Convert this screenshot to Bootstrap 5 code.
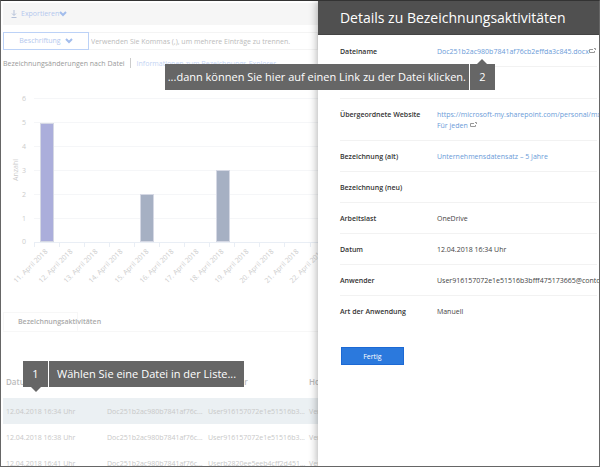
<!DOCTYPE html>
<html lang="de">
<head>
<meta charset="utf-8">
<meta name="viewport" content="width=device-width, initial-scale=1">
<title>Bezeichnungs-Explorer</title>
<link rel="stylesheet" href="https://cdn.jsdelivr.net/npm/bootstrap@5.3.0/dist/css/bootstrap.min.css">
<style>
  body { font-family: "Segoe UI", "Open Sans", "Noto Sans", sans-serif; font-size: 7px; line-height: 11px; color: #444; background: #fff; }
  .frame { border: 1px solid #666; border-top-color: #333; }
  .explorer { flex: 0 0 53%; min-width: 0; padding: 2px 0 0 2px; color: #c4c4c4; }
  .toolbar { height: 22px; padding-left: 8px; background: #f6f6f6; }
  .tool { padding: 0; border: 0; background: none; color: #b4c8ee; font-size: 7px; line-height: 12px; }
  .chevron { width: 8px; height: 6px; fill: none; stroke: #a3bdec; stroke-width: 2; }
  .filter { height: 18px; margin-top: 7px; }
  .filter-type { width: 86px; border: 1px solid #bcd2f7; }
  .filter-text { min-width: 0; padding: 0 2px; border: 1px solid #f4f4f4; border-left: 0; font-size: 7px; color: #bbb; }
  .filter-text::placeholder { color: #bbb; opacity: 1; }
  .view-title { margin-top: 8px; height: 12px; line-height: 12px; }
  .view-title h2 { font-size: 7px; line-height: 12px; color: #999; }
  .view-title a { height: 10px; margin-left: 5px; padding-left: 6px; border-left: 1px solid #ccc; color: #c3d3f3; text-decoration: none; }
  .chart { height: 216px; margin: 16px 0 0 0; }
  .chart text { font-size: 7px; fill: #ccc; }
  .tabs { height: 20px; margin: 10px 0 0; border-bottom: 1px solid #f7f7f7; }
  .tab-item { width: 75px; padding: 0 0 0 14px; border: 1px solid #f7f7f7; border-bottom-color: #fff; background: #fff; color: #aaa; font-weight: 600; text-align: left; white-space: nowrap; }
  .activities { width: 406px; margin-top: 40px; table-layout: fixed; }
  .activities th { height: 26px; padding: 0 3px 8px; font-size: 8px; font-weight: 600; color: #bbb; }
  .activities td { height: 26px; padding: 0 3px; color: #c8c8c8; }
  .activities .selected { background: #ebf0f3; }
  .drawer { z-index: 2; min-width: 0; background: #fff; box-shadow: -1px 0 8px rgba(0,0,0,.3); }
  .drawer-head { height: 34px; padding-left: 22px; background: #505050; border-bottom: 1px solid #444; }
  .drawer-head h1 { font-size: 14px; line-height: 18px; font-weight: 400; color: #fff; }
  .facts { padding: 1px 2px 0 22px; }
  .fact { min-height: 31px; padding: 10px 0 9px; border-bottom: 1px solid #f2f2f2; }
  .fact-blank { min-height: 32px; }
  .fact:last-child { border-bottom: 0; }
  .fact dt { flex: 0 0 97px; font-weight: 600; color: #333; }
  .fact a { color: #6a9bd8; text-decoration: none; }
  .popout { width: 7px; height: 6px; fill: none; stroke: #999; stroke-width: 1; vertical-align: baseline; }
  .done { width: 63px; height: 18px; margin: 20px 0 0 23px; padding: 0; border: 1px solid #1c69d4; background: #2b79dd; color: #fff; }
  .callout { z-index: 5; height: 26px; color: #fff; background: #666; font-size: 11px; line-height: 26px; }
  .callout-num { width: 26px; text-align: center; }
  .callout-list { left: 20px; top: -11px; }
  .callout-list .callout-text { padding: 0 8px; }
  .callout-list .callout-num { border-right: 1px solid #fff; }
  .callout-link { right: 104px; top: 29px; }
  .callout-link .callout-text { padding: 0 3px; }
  .callout-link .callout-num { border-left: 1px solid #fff; }
  .callout-num::after { content: ""; position: absolute; border: 5px solid transparent; }
  .callout-list .callout-num::after { left: 8px; top: 26px; border-top-color: #666; border-bottom: 0; }
  .callout-link .callout-num::after { right: 8px; bottom: 26px; border-bottom-color: #666; border-top: 0; }
</style>
<script src="https://cdn.jsdelivr.net/npm/bootstrap@5.3.0/dist/js/bootstrap.bundle.min.js"></script>
</head>
<body>
<div class="frame d-flex vh-100 overflow-hidden text-nowrap">
  <main class="explorer overflow-hidden">
    <div class="toolbar d-flex align-items-center">
      <button type="button" class="tool d-flex align-items-center">
        <svg class="me-1" width="6" height="8" viewBox="0 0 6 8" fill="none" stroke="#b4c0d8" aria-hidden="true"><path d="M3 0v5M1 3.500l2 2 2-2M.5 7.500h5"/></svg>
        Exportieren
        <svg class="chevron" viewBox="0 0 8 6" aria-hidden="true"><path d="M1 1l3 3 3-3"/></svg>
      </button>
    </div>
    <div class="filter d-flex">
      <button type="button" class="tool filter-type d-flex flex-shrink-0 align-items-center justify-content-center">
        Beschriftung
        <svg class="chevron ms-1" viewBox="0 0 8 6" aria-hidden="true"><path d="M1 1l3 3 3-3"/></svg>
      </button>
      <input type="text" class="filter-text flex-grow-1" aria-label="Beschriftung filtern" placeholder="Verwenden Sie Kommas (,), um mehrere Einträge zu trennen.">
    </div>
    <div class="view-title d-flex">
      <h2 class="m-0">Bezeichnungsänderungen nach Datei</h2>
      <a href="#">Informationen zum Bezeichnungs-Explorer</a>
    </div>
    <svg class="chart d-block w-100 overflow-hidden" role="img" aria-label="Anzahl pro Tag">
      <g stroke="#f5f6f8" stroke-width="1">
        <path d="M31 12.500H400M31 36.500H400M31 60.500H400M31 84.500H400M31 108.500H400M31 132.500H400"/>
        <path stroke="#e9eef5" d="M31 156.500H400M31.500 156v5M56.500 156v5M81.500 156v5M106.500 156v5M131.500 156v5M156.500 156v5M181.500 156v5M206.500 156v5M231.500 156v5M256.500 156v5M281.500 156v5M307.500 156v5"/>
      </g>
      <g stroke="#d5d8e4">
        <rect x="37.500" y="37.500" width="13" height="118" fill="#abaedb"/>
        <rect x="137.500" y="108.500" width="13" height="47" fill="#a6b0c3"/>
        <rect x="213.500" y="84.500" width="13" height="71" fill="#a6b0c3"/>
      </g>
      <g text-anchor="end">
        <text x="23" y="15">6</text><text x="23" y="39">5</text><text x="23" y="63">4</text><text x="23" y="87">3</text><text x="23" y="111">2</text><text x="23" y="135">1</text><text x="23" y="158">0</text>
        <text transform="translate(45 166) rotate(-45)">11. April 2018</text>
        <text transform="translate(70 166) rotate(-45)">12. April 2018</text>
        <text transform="translate(95 166) rotate(-45)">13. April 2018</text>
        <text transform="translate(120 166) rotate(-45)">14. April 2018</text>
        <text transform="translate(146 166) rotate(-45)">15. April 2018</text>
        <text transform="translate(171 166) rotate(-45)">16. April 2018</text>
        <text transform="translate(196 166) rotate(-45)">17. April 2018</text>
        <text transform="translate(221 166) rotate(-45)">18. April 2018</text>
        <text transform="translate(246 166) rotate(-45)">19. April 2018</text>
        <text transform="translate(271 166) rotate(-45)">20. April 2018</text>
        <text transform="translate(296 166) rotate(-45)">21. April 2018</text>
        <text transform="translate(321 166) rotate(-45)">22. April 2018</text>
      </g>
      <text text-anchor="middle" transform="translate(15 84) rotate(-90)">Anzahl</text>
    </svg>
    <div class="tabs d-flex">
      <button type="button" class="tab-item">Bezeichnungsaktivitäten</button>
    </div>
    <div class="position-relative">
      <table class="activities">
        <colgroup><col style="width:101px"><col style="width:101px"><col style="width:101px"><col style="width:103px"></colgroup>
        <thead>
          <tr><th scope="col">Datum</th><th scope="col" aria-label="Datei"></th><th scope="col">Anwender</th><th scope="col">Ho</th></tr>
        </thead>
        <tbody>
          <tr class="selected"><td>12.04.2018 16:34 Uhr</td><td>Doc251b2ac980b7841af76c...</td><td>User916157072e1e51516b3...</td><td>Ver</td></tr>
          <tr><td>12.04.2018 16:38 Uhr</td><td>Doc251b2ac980b7841af76c...</td><td>User916157072e1e51516b3...</td><td>Ver</td></tr>
          <tr><td>12.04.2018 16:41 Uhr</td><td>Doc251b2ac980b7841af76c...</td><td>Userb2820ee5eeb4cff2d451...</td><td>Ver</td></tr>
        </tbody>
      </table>
      <div class="callout callout-list position-absolute d-flex">
        <span class="callout-num">1</span><span class="callout-text">Wählen Sie eine Datei in der Liste...</span>
      </div>
    </div>
  </main>
  <aside class="drawer position-relative flex-grow-1">
    <div class="drawer-head d-flex align-items-center"><h1 class="m-0">Details zu Bezeichnungsaktivitäten</h1></div>
    <div class="position-relative">
      <dl class="facts m-0">
        <div class="fact d-flex"><dt>Dateiname</dt><dd class="m-0"><a href="#">Doc251b2ac980b7841af76cb2effda3c845.docx</a><svg class="popout" viewBox="0 0 7 6" aria-hidden="true"><path d="M4 1.500H.5v3h5V3M5 .5h1.500V2"/></svg></dd></div>
        <div class="fact fact-blank"></div>
        <div class="fact d-flex"><dt>Übergeordnete Website</dt><dd class="m-0"><a href="#">https://microsoft-my.sharepoint.com/personal/mx<br>Für jeden</a> <svg class="popout" viewBox="0 0 7 6" aria-hidden="true"><path d="M4 1.500H.5v3h5V3M5 .5h1.500V2"/></svg></dd></div>
        <div class="fact d-flex"><dt>Bezeichnung (alt)</dt><dd class="m-0"><a href="#">Unternehmensdatensatz – 5 Jahre</a></dd></div>
        <div class="fact d-flex"><dt>Bezeichnung (neu)</dt><dd class="m-0"></dd></div>
        <div class="fact d-flex"><dt>Arbeitslast</dt><dd class="m-0">OneDrive</dd></div>
        <div class="fact d-flex"><dt>Datum</dt><dd class="m-0">12.04.2018 16:34 Uhr</dd></div>
        <div class="fact d-flex"><dt>Anwender</dt><dd class="m-0">User916157072e1e51516b3bfff475173665@conto</dd></div>
        <div class="fact d-flex"><dt>Art der Anwendung</dt><dd class="m-0">Manuell</dd></div>
      </dl>
      <div class="callout callout-link position-absolute d-flex">
        <span class="callout-text">...dann können Sie hier auf einen Link zu der Datei klicken.</span><span class="callout-num">2</span>
      </div>
    </div>
    <button type="button" class="done d-block">Fertig</button>
  </aside>
</div>
</body>
</html>
